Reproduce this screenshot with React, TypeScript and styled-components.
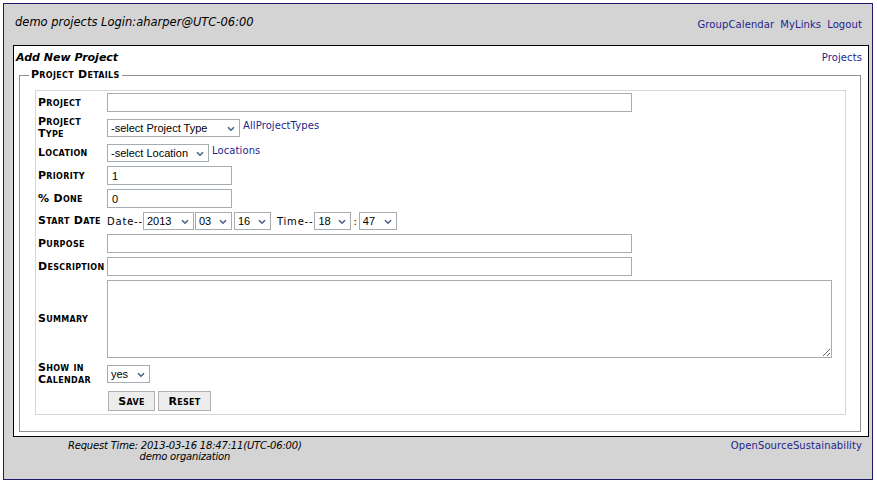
import styled, { createGlobalStyle } from "styled-components";

const GlobalStyle = createGlobalStyle`
  html, body {
    margin: 0;
    padding: 0;
    background: #fff;
  }
  body {
    font-family: "DejaVu Sans", Verdana, sans-serif;
    color: #000;
  }
`;

const yearOpts = ["2012", "2013", "2014"];
const monthOpts = ["01", "02", "03", "04", "05", "06", "07", "08", "09", "10", "11", "12"];
const dayOpts = Array.from({ length: 31 }, (_, i) => String(i + 1).padStart(2, "0"));
const hourOpts = Array.from({ length: 24 }, (_, i) => String(i).padStart(2, "0"));
const minuteOpts = Array.from({ length: 60 }, (_, i) => String(i).padStart(2, "0"));

type SelectProps = {
  width: number;
  value: string;
  options: string[];
};

const Select = ({ width, value, options }: SelectProps) => (
  <SelectWrap $w={width}>
    <NativeSelect defaultValue={value}>
      {options.map((o) => (
        <option key={o} value={o}>
          {o}
        </option>
      ))}
    </NativeSelect>
    <Chevron width="8" height="6" viewBox="0 0 8 6">
      <polyline points="1,1.2 4,4.2 7,1.2" fill="none" stroke="#4a5f8a" strokeWidth="1.6" />
    </Chevron>
  </SelectWrap>
);

const App = () => {
  return (
    <>
      <GlobalStyle />
      <Page>
        <Header>
          <SiteTitle>demo projects Login:aharper@UTC-06:00</SiteTitle>
          <NavLinks>
            <Link href="#">GroupCalendar</Link>
            <Link href="#">MyLinks</Link>
            <Link href="#">Logout</Link>
          </NavLinks>
        </Header>

        <Main>
          <ContentBox>
            <TitleBar>
              <PageTitle>Add New Project</PageTitle>
              <Link href="#">Projects</Link>
            </TitleBar>

            <Fieldset>
              <Legend>Project Details</Legend>
              <FormTable>
                <Row>
                  <Label>Project</Label>
                  <Field>
                    <TextInput $w={525} defaultValue="" />
                  </Field>
                </Row>
                <Row>
                  <Label>Project Type</Label>
                  <Field>
                    <Select width={133} value="-select Project Type" options={["-select Project Type"]} />
                    <SideLink href="#">AllProjectTypes</SideLink>
                  </Field>
                </Row>
                <Row>
                  <Label>Location</Label>
                  <Field>
                    <Select width={102} value="-select Location" options={["-select Location"]} />
                    <SideLink href="#">Locations</SideLink>
                  </Field>
                </Row>
                <Row>
                  <Label>Priority</Label>
                  <Field>
                    <TextInput $w={125} defaultValue="1" />
                  </Field>
                </Row>
                <Row>
                  <Label>% Done</Label>
                  <Field>
                    <TextInput $w={125} defaultValue="0" />
                  </Field>
                </Row>
                <Row>
                  <Label>Start Date</Label>
                  <Field>
                    <Plain>Date--</Plain>
                    <Select width={51} value="2013" options={yearOpts} />
                    <Spacer $w={1} />
                    <Select width={37} value="03" options={monthOpts} />
                    <Spacer $w={2} />
                    <Select width={37} value="16" options={dayOpts} />
                    <Plain $left={6}>Time--</Plain>
                    <Spacer $w={1} />
                    <Select width={37} value="18" options={hourOpts} />
                    <Colon>:</Colon>
                    <Select width={38} value="47" options={minuteOpts} />
                  </Field>
                </Row>
                <Row>
                  <Label>Purpose</Label>
                  <Field>
                    <TextInput $w={525} defaultValue="" />
                  </Field>
                </Row>
                <Row>
                  <Label>Description</Label>
                  <Field>
                    <TextInput $w={525} defaultValue="" />
                  </Field>
                </Row>
                <Row>
                  <Label>Summary</Label>
                  <Field>
                    <TextArea defaultValue="" />
                  </Field>
                </Row>
                <Row>
                  <Label>Show in Calendar</Label>
                  <Field>
                    <Select width={43} value="yes" options={["yes", "no"]} />
                  </Field>
                </Row>
                <Row>
                  <Label />
                  <Field>
                    <Button $w={47}>Save</Button>
                    <Button $w={53}>Reset</Button>
                  </Field>
                </Row>
              </FormTable>
            </Fieldset>
          </ContentBox>
        </Main>

        <Footer>
          <FooterInfo>
            <div>Request Time: 2013-03-16 18:47:11(UTC-06:00)</div>
            <div>demo organization</div>
          </FooterInfo>
          <Link href="#">OpenSourceSustainability</Link>
        </Footer>
      </Page>
    </>
  );
};

export default App;

const Page = styled.div`
  margin: 3px 0 0 3px;
  width: 870px;
  box-sizing: border-box;
  border: 1px solid #1c1c6a;
  background: #d4d4d4;
`;

const Header = styled.div`
  height: 41px;
  display: flex;
  justify-content: space-between;
  align-items: flex-start;
  padding: 0 10px 0 11px;
  box-sizing: border-box;
`;

const SiteTitle = styled.div`
  margin-top: 11px;
  font-size: 11.5px;
  line-height: 14px;
  font-style: italic;
`;

const NavLinks = styled.div`
  margin-top: 15px;
  display: flex;
  gap: 6px;
`;

const Link = styled.a`
  font-size: 10px;
  line-height: 12px;
  color: #1f1f8c;
  text-decoration: none;
  letter-spacing: 0.1px;
`;

const Main = styled.div`
  padding: 0 3px 0 9px;
`;

const ContentBox = styled.div`
  background: #fff;
  border: 1px solid #000;
  padding-bottom: 4px;
`;

const TitleBar = styled.div`
  display: flex;
  justify-content: space-between;
  align-items: center;
  padding: 5px 6px 0 2px;
`;

const PageTitle = styled.div`
  font-size: 11px;
  line-height: 14px;
  font-weight: bold;
  font-style: italic;
`;

const Fieldset = styled.fieldset`
  margin: 4px 7px 0 5px;
  padding: 9px 14px 16px 9px;
  border: 1px solid #909090;
`;

const smallCaps = `
  font-size: 11px;
  font-weight: bold;
  font-variant: small-caps;
  letter-spacing: 0.3px;
`;

const Legend = styled.legend`
  padding: 0 2px;
  line-height: 12px;
  ${smallCaps}
`;

const FormTable = styled.div`
  margin-left: 6px;
  border: 1px solid #d6d6d6;
  padding: 2px 2px 3px 2px;
  display: flex;
  flex-direction: column;
  gap: 4px;
`;

const Row = styled.div`
  display: flex;
  align-items: center;
`;

const Label = styled.div`
  width: 69px;
  flex-shrink: 0;
  line-height: 12px;
  ${smallCaps}
`;

const Field = styled.div`
  display: flex;
  align-items: center;
`;

const inputFont = `11px "Liberation Sans", Arial, sans-serif`;

const TextInput = styled.input<{ $w: number }>`
  width: ${(p) => p.$w}px;
  height: 19px;
  box-sizing: border-box;
  border: 1px solid #a5acb2;
  padding: 0 4px;
  font: ${inputFont};
  outline: none;
  border-radius: 0;
`;

const TextArea = styled.textarea`
  width: 725px;
  height: 78px;
  box-sizing: border-box;
  border: 1px solid #a5acb2;
  padding: 2px 4px;
  font: ${inputFont};
  outline: none;
  border-radius: 0;
  display: block;
`;

const SelectWrap = styled.span<{ $w: number }>`
  position: relative;
  display: inline-flex;
  width: ${(p) => p.$w}px;
  height: 18px;
  flex-shrink: 0;
`;

const NativeSelect = styled.select`
  appearance: none;
  width: 100%;
  height: 100%;
  box-sizing: border-box;
  border: 1px solid #a5acb2;
  border-radius: 0;
  background: #fff;
  padding: 0 14px 0 3px;
  font: ${inputFont};
  color: #000;
  outline: none;
`;

const Chevron = styled.svg`
  position: absolute;
  right: 5px;
  top: 7px;
  pointer-events: none;
`;

const SideLink = styled(Link)`
  margin: 0 0 5px 3px;
`;

const Plain = styled.span<{ $left?: number }>`
  font-size: 10px;
  letter-spacing: 0.8px;
  margin-left: ${(p) => p.$left ?? 0}px;
`;

const Spacer = styled.span<{ $w: number }>`
  width: ${(p) => p.$w}px;
`;

const Colon = styled.span`
  font-size: 10px;
  padding: 0 2px;
`;

const Button = styled.button<{ $w: number }>`
  width: ${(p) => p.$w}px;
  height: 20px;
  margin: 1px 2px 0 1px;
  padding: 0;
  border: 1px solid #b0b0b0;
  border-radius: 0;
  background: #ededed;
  font-family: "DejaVu Sans", Verdana, sans-serif;
  color: #000;
  ${smallCaps}
`;

const Footer = styled.div`
  display: flex;
  justify-content: space-between;
  align-items: flex-start;
  padding: 3px 10px 17px 64px;
`;

const FooterInfo = styled.div`
  font-size: 10px;
  line-height: 11px;
  font-style: italic;
  text-align: center;
  letter-spacing: -0.2px;
`;
